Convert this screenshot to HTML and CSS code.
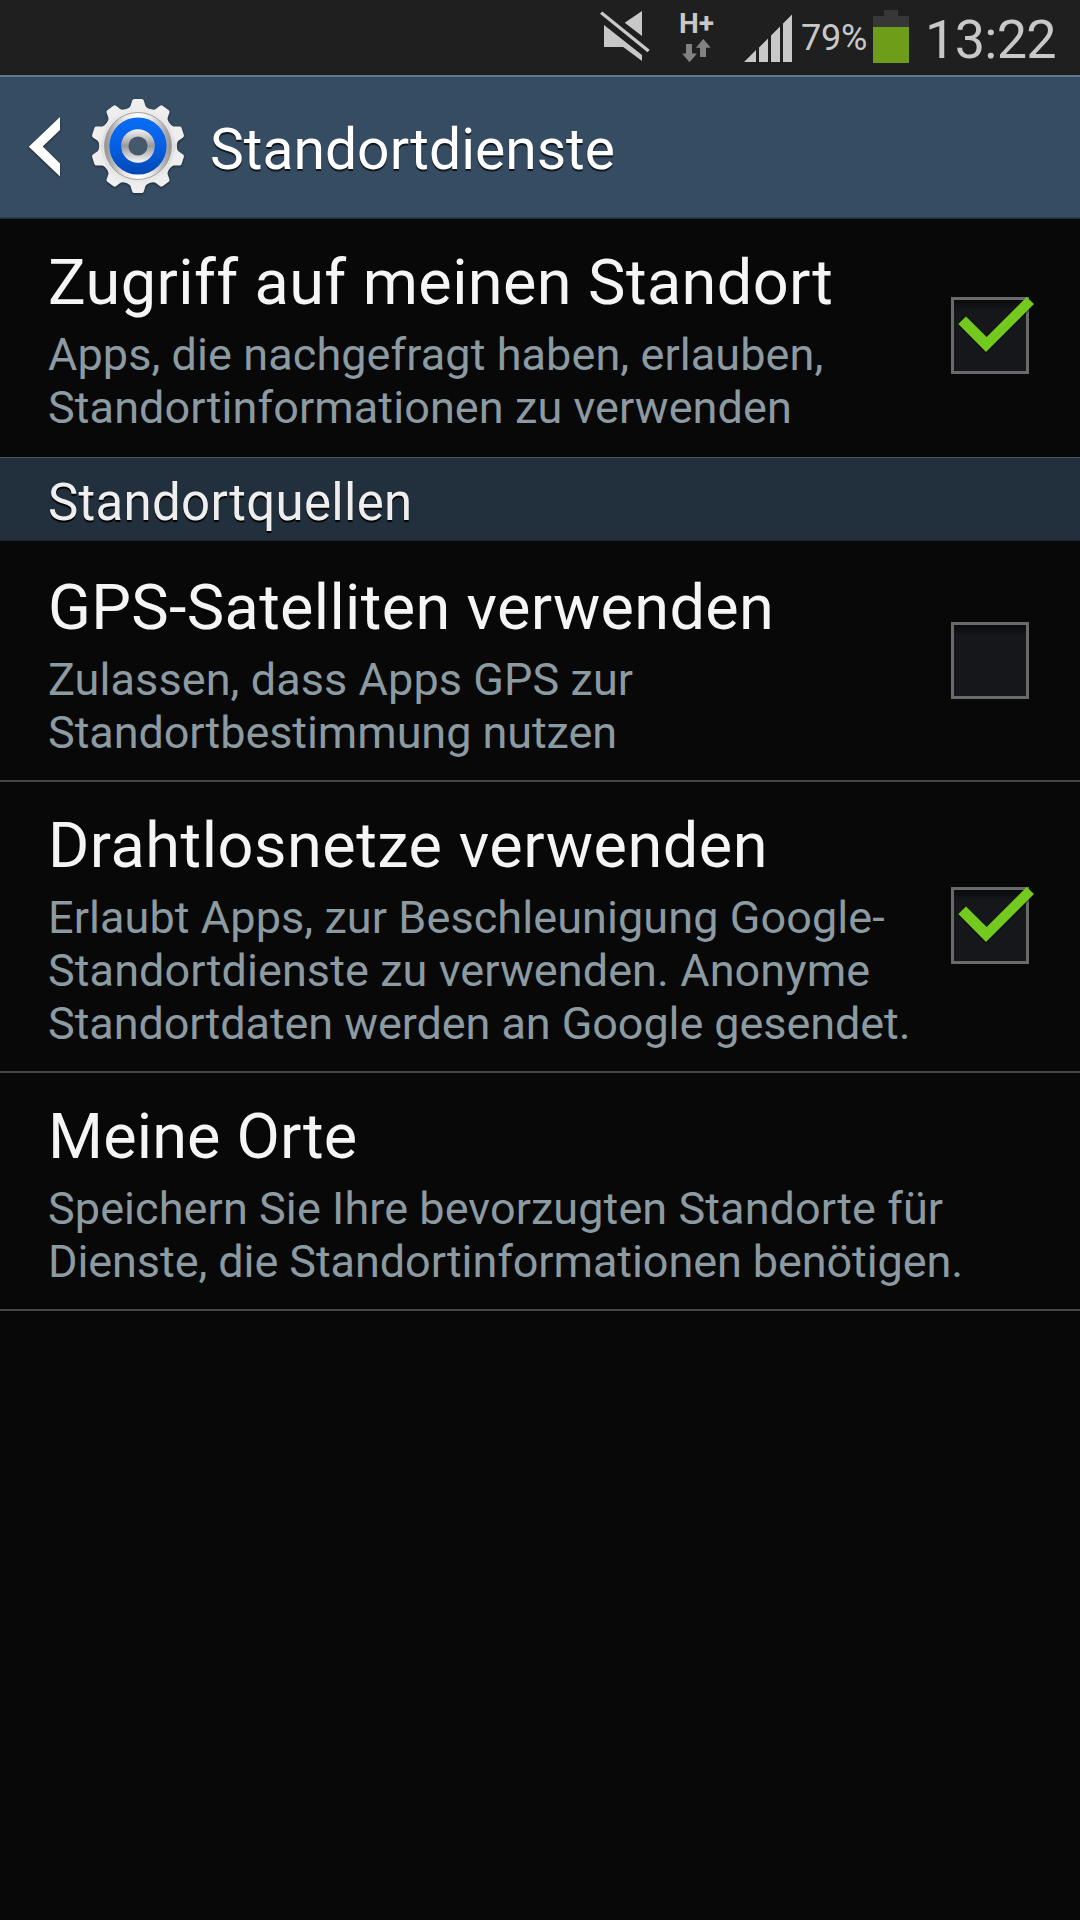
FILE: index.html
```html
<!DOCTYPE html>
<html lang="de">
<head>
<meta charset="utf-8">
<title>Standortdienste</title>
<link rel="stylesheet" href="styles.css">
</head>
<body>
<div class="statusbar">
  <svg class="mute" width="52" height="52" viewBox="0 0 52 52"><g fill="#c8c8c8"><path d="M4 15 42 45V51L23.300 37H4Z"/><path d="M42 1V26L24.700 12.700Z"/><path d="M0 3.800 2.300 1.500 49.700 39.700 47.500 42.300Z"/></g></svg>
  <div class="network"><span class="network-type">H+</span>
    <svg width="30" height="24" viewBox="0 0 30 24"><path fill="#828282" d="M5 5h6v9.500h5L8.500 23.300 1 14.500h4ZM19 18V8.700h-4L22.300 0 29.700 8.700H25V18Z"/></svg>
  </div>
  <svg class="signal" width="48" height="48" viewBox="0 0 48 48"><path fill="#c8c8c8" d="M0 48 12 36V48ZM15 48V33.500L24 24.500V48ZM27 48V21.500L36 12.500V48ZM39 48V9.500L48 .5V48Z"/></svg>
  <span class="percent">79%</span>
  <svg class="battery" width="36" height="53" viewBox="0 0 36 53"><path fill="#373737" d="M11 0H25V6H36V17H0V6H11Z"/><path fill="#6e9e19" d="M0 17H36V53H0Z"/></svg>
  <span class="clock">13:22</span>
</div>
<header class="actionbar">
  <svg class="back" width="32" height="62" viewBox="0 0 32 62"><path fill="#fff" d="M32 0V13L14.700 29.500 32 46.500V59.500L.8 29.800Z"/></svg>
  <svg class="gear" width="98" height="98" viewBox="-49 -49 98 98">
    <defs>
      <linearGradient id="metal" x1="0" y1="-47" x2="0" y2="47" gradientUnits="userSpaceOnUse"><stop offset="0" stop-color="#f0f0f0"/><stop offset=".5" stop-color="#dedede"/><stop offset="1" stop-color="#ececec"/></linearGradient>
      <linearGradient id="rim" x1="-34" y1="0" x2="34" y2="0" gradientUnits="userSpaceOnUse"><stop offset="0" stop-color="#8e8e8e"/><stop offset=".3" stop-color="#e8e8e8"/><stop offset=".5" stop-color="#fff"/><stop offset=".7" stop-color="#e8e8e8"/><stop offset="1" stop-color="#8e8e8e"/></linearGradient>
      <linearGradient id="blue" x1="0" y1="0" x2="0" y2="1"><stop offset="0" stop-color="#0a6cf5"/><stop offset=".5" stop-color="#0660e4"/><stop offset="1" stop-color="#0048b4"/></linearGradient>
      <linearGradient id="hub" x1="0" y1="0" x2="0" y2="1"><stop offset="0" stop-color="#f4f4f4"/><stop offset=".5" stop-color="#9a9a9a"/><stop offset="1" stop-color="#f8f8f8"/></linearGradient>
      <path id="tooth" d="M-13 -36.500Q-8.500 -38 -7.500 -40L-5.800 -45.500Q-5.300 -47 -3.800 -47H3.800Q5.300 -47 5.800 -45.500L7.500 -40Q8.500 -38 13 -36.500Z"/>
    </defs>
    <g fill="url(#metal)">
      <circle r="38.800"/>
      <use href="#tooth"/><use href="#tooth" transform="rotate(36)"/><use href="#tooth" transform="rotate(72)"/><use href="#tooth" transform="rotate(108)"/><use href="#tooth" transform="rotate(144)"/><use href="#tooth" transform="rotate(180)"/><use href="#tooth" transform="rotate(216)"/><use href="#tooth" transform="rotate(252)"/><use href="#tooth" transform="rotate(288)"/><use href="#tooth" transform="rotate(324)"/>
    </g>
    <circle r="33.500" fill="url(#rim)" stroke="#a2a2a2"/>
    <circle r="28.600" fill="url(#blue)"/>
    <circle r="16.800" fill="url(#hub)"/>
    <circle r="9.600" fill="#45596d"/>
  </svg>
  <h1 class="heading">Standortdienste</h1>
</header>
<main>
  <section class="row">
    <div class="text">
      <h2 class="title access">Zugriff auf meinen Standort</h2>
      <p class="summary"><span class="loose">Apps, die nachgefragt haben, erlauben,</span><br><span class="loose">Standortinformationen zu verwenden</span></p>
    </div>
    <svg class="check" width="84" height="77" viewBox="0 0 84 77"><use href="#box"/><use href="#tick"/></svg>
  </section>
  <h2 class="category">Standortquellen</h2>
  <section class="row lined">
    <div class="text">
      <h2 class="title gps">GPS-Satelliten verwenden</h2>
      <p class="summary"><span class="loose">Zulassen, dass Apps GPS zur</span><br><span class="tight">Standortbestimmung nutzen</span></p>
    </div>
    <svg class="check" width="84" height="77" viewBox="0 0 84 77">
      <defs>
        <linearGradient id="well" x1="0" y1="3" x2="0" y2="14" gradientUnits="userSpaceOnUse"><stop offset="0" stop-color="#0a0b0c"/><stop offset="1" stop-color="#16171b"/></linearGradient>
        <g id="box"><path fill="#6a6a6a" d="M0 0H78V77H0Z"/><path fill="url(#well)" d="M3 3H75V74H3Z"/></g>
        <g id="tick"><path fill="#000" opacity=".4" d="M7.700 29 15 21.700 35.700 42 75 3 83 9 35 57Z"/><path fill="#74c91f" d="M7.300 27 15 19.500 35.700 40 75.700 0 83 7 35 55Z"/></g>
      </defs>
      <use href="#box"/>
    </svg>
  </section>
  <section class="row lined">
    <div class="text">
      <h2 class="title wireless">Drahtlosnetze verwenden</h2>
      <p class="summary"><span class="loose">Erlaubt Apps, zur Beschleunigung Google-</span><br><span class="loose">Standortdienste zu verwenden. Anonyme</span><br><span class="tight">Standortdaten werden an Google gesendet.</span></p>
    </div>
    <svg class="check" width="84" height="77" viewBox="0 0 84 77"><use href="#box"/><use href="#tick"/></svg>
  </section>
  <section class="row lined">
    <div class="text">
      <h2 class="title places">Meine Orte</h2>
      <p class="summary"><span class="loose">Speichern Sie Ihre bevorzugten Standorte für</span><br><span class="tight">Dienste, die Standortinformationen benötigen.</span></p>
    </div>
  </section>
</main>
</body>
</html>
```
FILE: styles.css
```css
* { box-sizing: border-box; }
body { margin: 0; width: 1080px; min-height: 1920px; background: #080808; font-family: Roboto, sans-serif; }
h1, h2, p { margin: 0; font-weight: 400; white-space: nowrap; }
svg { display: block; flex: none; }

.statusbar { height: 75px; display: flex; align-items: flex-start; justify-content: flex-end; padding-right: 23px; background: #1f1f1f; color: #c8c8c8; }
.mute { margin: 10px 29px 0 0; }
.network { width: 34px; margin: 8px 29px 0 0; }
.network-type { display: block; height: 31px; margin-left: -2px; font-size: 28px; line-height: 32px; font-weight: 700; }
.signal { margin: 14px 10px 0 0; }
.percent { width: 73px; margin: 17px 0 0 -1px; font-size: 36px; line-height: 42px; letter-spacing: -.2px; }
.battery { margin: 10px 16px 0 -1px; }
.clock { width: 132px; margin-top: 8px; font-size: 54px; line-height: 64px; letter-spacing: -.7px; }

.actionbar { height: 144px; display: flex; align-items: flex-start; padding-left: 28px; background: #364c62; border-top: 2px solid #60788e; border-bottom: 1px solid #202c38; box-shadow: inset 0 -1px #2a3e51; }
.back { margin: 40px 29px 0 0; filter: drop-shadow(0 1px 1px rgba(0,0,0,.5)); }
.gear { margin: 20px 23px 0 0; filter: drop-shadow(0 1px 1px rgba(0,0,0,.5)); }
.heading { margin-top: 39px; font-size: 57px; line-height: 67px; color: #fff; text-shadow: 0 2px 1px #101418; }

.row { display: flex; align-items: center; justify-content: space-between; padding: 0 45px 0 48px; border-bottom: 2px solid transparent; }
.lined { border-color: #464648; }
.text { padding: 27px 0 21px; }
.title { font-size: 63px; line-height: 74px; color: #f5f5f5; }
.access { letter-spacing: .4px; }
.gps { letter-spacing: .33px; }
.wireless { letter-spacing: .52px; }
.places { letter-spacing: .15px; }
.summary { margin-top: 8px; font-size: 45px; line-height: 53px; color: #8c9aa1; }
.loose { letter-spacing: .08px; }
.tight { letter-spacing: -.08px; }
.check { margin-bottom: 3px; overflow: visible; }

.category { height: 84px; margin-bottom: 3px; padding: 14px 48px 0; font-size: 51px; line-height: 61px; letter-spacing: .29px; color: #eee; background: #22303d; border-top: 1px solid #4c5860; border-bottom: 1px solid #18232c; text-shadow: 0 2px 1px #000; }
```
